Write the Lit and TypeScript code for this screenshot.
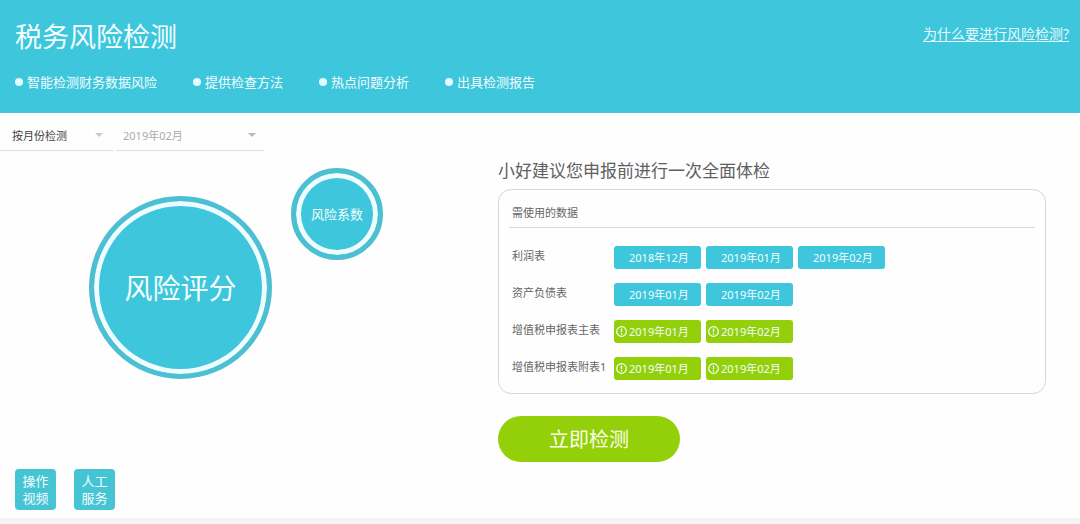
import { LitElement, html, css, svg, nothing } from "lit";
import { customElement, property, state } from "lit/decorators.js";

interface DataRow {
  name: string;
  months: string[];
  missing: boolean;
}

const FEATURES = ["智能检测财务数据风险", "提供检查方法", "热点问题分析", "出具检测报告"];

const ROWS: DataRow[] = [
  { name: "利润表", months: ["2018年12月", "2019年01月", "2019年02月"], missing: false },
  { name: "资产负债表", months: ["2019年01月", "2019年02月"], missing: false },
  { name: "增值税申报表主表", months: ["2019年01月", "2019年02月"], missing: true },
  { name: "增值税申报表附表1", months: ["2019年01月", "2019年02月"], missing: true },
];

const alertIcon = svg`
  <circle cx="5.5" cy="5.5" r="4.8" fill="none" stroke="currentColor" stroke-width="1.2"></circle>
  <path d="M5.5 2.6v3.4M5.5 7v1.4" stroke="currentColor" stroke-width="1.3" fill="none"></path>`;

@customElement("month-tag")
export class MonthTag extends LitElement {
  @property() month = "";
  @property({ type: Boolean, reflect: true }) missing = false;

  static styles = css`
    :host {
      display: grid;
      grid-template-columns: 11px auto;
      column-gap: 2px;
      align-items: center;
      box-sizing: border-box;
      width: 87px;
      height: 23px;
      padding-left: 2px;
      border-radius: 3px;
      background: #3ec6dc;
      color: #f4feff;
      font-size: 11px;
      line-height: 20px;
      white-space: nowrap;
    }
    :host([missing]) {
      background: #93d00a;
    }
    .icon {
      display: block;
      width: 11px;
      height: 11px;
    }
    .text {
      grid-column: 2;
    }
  `;

  render() {
    return html`
      ${this.missing
        ? html`<svg class="icon" viewBox="0 0 11 11" aria-hidden="true">${alertIcon}</svg>`
        : nothing}
      <span class="text">${this.month}</span>
    `;
  }
}

@customElement("score-disc")
export class ScoreDisc extends LitElement {
  static styles = css`
    :host {
      display: grid;
      place-items: center;
      box-sizing: border-box;
      flex: none;
      border: 5px solid #4dbfd2;
      border-radius: 50%;
      background: #3ec6dc;
      box-shadow: inset 0 0 0 5px #effdff;
      color: #f4feff;
    }
  `;

  render() {
    return html`<slot></slot>`;
  }
}

@customElement("app-root")
export class AppRoot extends LitElement {
  @state() private mode = "按月份检测";
  @state() private month = "2019年02月";

  static styles = css`
    :host {
      display: flex;
      flex-direction: column;
      min-height: 100vh;
      background: #fefefe;
      color: #666;
      font-family: "Noto Sans", "Noto Sans CJK SC", sans-serif;
      font-size: 11px;
      line-height: 20px;
    }
    h1,
    h2,
    h3,
    ul {
      margin: 0;
      padding: 0;
      font-weight: 400;
    }
    button,
    select {
      font: inherit;
      border: 0;
      margin: 0;
      cursor: pointer;
    }
    .header {
      display: grid;
      grid-template-columns: 1fr auto;
      row-gap: 15px;
      padding: 17px 11px 21px 15px;
      background: #3ec6dc;
      color: #f4feff;
    }
    .title {
      font-size: 27px;
      line-height: 40px;
    }
    .why {
      align-self: center;
      color: #e4fbff;
      font-size: 14px;
      line-height: 28px;
      margin-bottom: 6px;
      text-underline-offset: 2px;
    }
    .features {
      grid-column: 1 / -1;
      display: flex;
      flex-wrap: wrap;
      column-gap: 36px;
      list-style: none;
      font-size: 13px;
    }
    .feature {
      display: flex;
      align-items: center;
      gap: 4px;
    }
    .dot {
      width: 8px;
      height: 8px;
      border-radius: 50%;
      background: #e4fbff;
    }
    .main {
      flex: 1;
      display: grid;
      grid-template-columns: minmax(0, 498fr) minmax(0, 548fr);
      padding-right: 34px;
    }
    .left {
      display: flex;
      flex-direction: column;
      padding-bottom: 8px;
    }
    .filters {
      display: flex;
      gap: 3px;
      padding-top: 9px;
    }
    .field {
      position: relative;
      width: 148px;
      border-bottom: 1px solid #dedee4;
      color: #aaa;
    }
    .field.mode {
      width: 113px;
      color: #444;
    }
    .select {
      appearance: none;
      display: block;
      width: 100%;
      height: 28px;
      padding: 0 24px 0 7px;
      border-radius: 0;
      background: transparent;
      color: inherit;
    }
    .mode .select {
      padding-left: 12px;
    }
    .arrow {
      position: absolute;
      right: 8px;
      top: 11px;
      width: 8px;
      height: 4px;
      fill: #b8b8bc;
      pointer-events: none;
    }
    .mode .arrow {
      right: 10px;
      fill: #ccccd0;
    }
    .discs {
      display: flex;
      align-items: flex-start;
      gap: 19px;
      padding: 17px 0 16px 89px;
    }
    .big {
      width: 183px;
      height: 183px;
      margin-top: 28px;
      font-size: 28px;
    }
    .small {
      width: 92px;
      height: 92px;
      font-size: 13px;
    }
    .helpers {
      display: flex;
      gap: 18px;
      margin-top: auto;
      padding-left: 15px;
    }
    .helper {
      width: 41px;
      height: 41px;
      padding: 0 7px;
      border-radius: 4px;
      background: #45c4d4;
      color: #f4feff;
      font-size: 13px;
      line-height: 17px;
    }
    .heading {
      padding-top: 44px;
      color: #606060;
      font-size: 17px;
      line-height: 28px;
    }
    .panel {
      margin-top: 4px;
      padding: 0 10px 6px;
      border: 1px solid #d3d6e2;
      border-radius: 13px;
    }
    .caption {
      padding: 13px 3px 4px;
      border-bottom: 1px solid #d9dbe4;
      font-size: 11px;
    }
    .data {
      margin-top: 11px;
      border-collapse: collapse;
    }
    .name {
      box-sizing: border-box;
      min-width: 105px;
      height: 37px;
      padding: 0 0 3px 3px;
      text-align: left;
      font-weight: 400;
      white-space: nowrap;
    }
    .cell {
      padding: 0;
    }
    .tags {
      display: flex;
      flex-wrap: wrap;
      gap: 5px;
    }
    .start {
      width: 182px;
      height: 46px;
      margin-top: 22px;
      padding: 2px 0 0;
      border-radius: 23px;
      background: #93d00a;
      color: #fbffe8;
      font-size: 20px;
    }
    .foot {
      height: 6px;
      background: #f5f5f8;
    }
  `;

  private arrow() {
    return html`<svg class="arrow" viewBox="0 0 8 4" aria-hidden="true"><path d="M0 0h8L4 4z"></path></svg>`;
  }

  render() {
    return html`
      <header class="header">
        <h1 class="title">税务风险检测</h1>
        <a class="why" href="#why">为什么要进行风险检测?</a>
        <ul class="features">
          ${FEATURES.map((f) => html`<li class="feature"><span class="dot"></span>${f}</li>`)}
        </ul>
      </header>
      <main class="main">
        <section class="left">
          <div class="filters">
            <div class="field mode">
              <select
                class="select"
                aria-label="检测方式"
                .value=${this.mode}
                @change=${(e: Event) => (this.mode = (e.target as HTMLSelectElement).value)}
              >
                <option>按月份检测</option>
              </select>
              ${this.arrow()}
            </div>
            <div class="field">
              <select
                class="select"
                aria-label="月份"
                .value=${this.month}
                @change=${(e: Event) => (this.month = (e.target as HTMLSelectElement).value)}
              >
                <option>2019年02月</option>
              </select>
              ${this.arrow()}
            </div>
          </div>
          <div class="discs">
            <score-disc class="big">风险评分</score-disc>
            <score-disc class="small">风险系数</score-disc>
          </div>
          <div class="helpers">
            <button class="helper" type="button">操作视频</button>
            <button class="helper" type="button">人工服务</button>
          </div>
        </section>
        <section>
          <h2 class="heading">小好建议您申报前进行一次全面体检</h2>
          <div class="panel">
            <h3 class="caption">需使用的数据</h3>
            <table class="data">
              <tbody>
                ${ROWS.map(
                  (row) => html`<tr>
                    <th class="name" scope="row">${row.name}</th>
                    <td class="cell">
                      <div class="tags">
                        ${row.months.map(
                          (m) => html`<month-tag .month=${m} ?missing=${row.missing}></month-tag>`
                        )}
                      </div>
                    </td>
                  </tr>`
                )}
              </tbody>
            </table>
          </div>
          <button class="start" type="button">立即检测</button>
        </section>
      </main>
      <footer class="foot"></footer>
    `;
  }
}
